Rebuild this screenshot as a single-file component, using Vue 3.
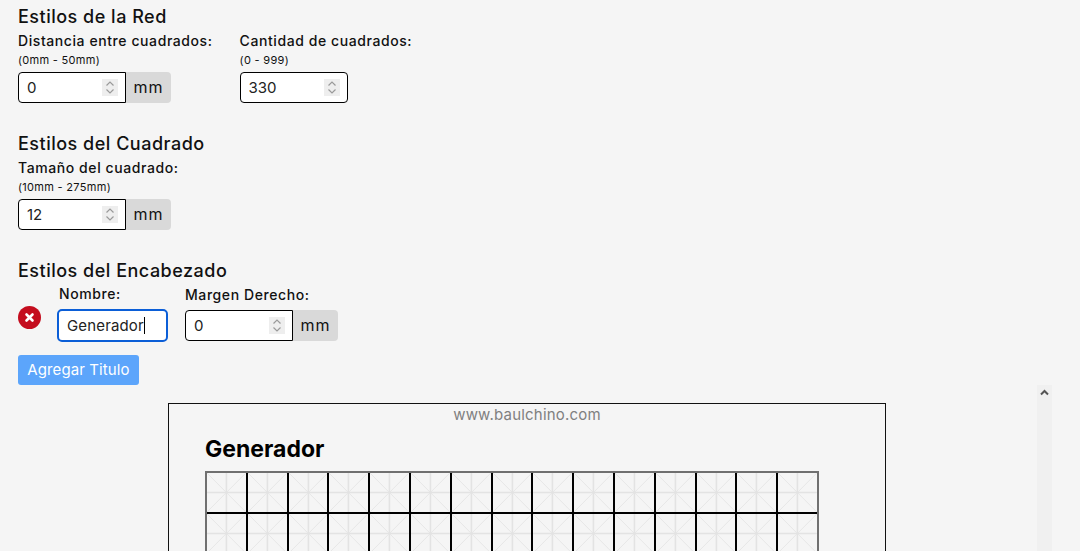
<template>
  <div class="app">
    <section class="group">
      <h2 class="groupTitle">Estilos de la Red</h2>
      <div class="fields">
        <div class="field">
          <label class="fieldLabel">Distancia entre cuadrados:</label>
          <small class="hint">(0mm - 50mm)</small>
          <div class="inputRow">
            <div class="inputWrap">
              <input class="numInput" type="number" value="0" />
              <span class="spin"><svg width="16" height="17" viewBox="0 0 16 17"><path d="M4.5 6.5L8 3l3.5 3.5M4.5 10.5L8 14l3.5-3.5" fill="none" stroke="#9a9a9a" stroke-width="1.2" /></svg></span>
            </div>
            <span class="unit">mm</span>
          </div>
        </div>
        <div class="field">
          <label class="fieldLabel">Cantidad de cuadrados:</label>
          <small class="hint">(0 - 999)</small>
          <div class="inputRow">
            <div class="inputWrap">
              <input class="numInput alone" type="number" value="330" />
              <span class="spin"><svg width="16" height="17" viewBox="0 0 16 17"><path d="M4.5 6.5L8 3l3.5 3.5M4.5 10.5L8 14l3.5-3.5" fill="none" stroke="#9a9a9a" stroke-width="1.2" /></svg></span>
            </div>
          </div>
        </div>
      </div>
    </section>

    <section class="group">
      <h2 class="groupTitle">Estilos del Cuadrado</h2>
      <div class="fields">
        <div class="field">
          <label class="fieldLabel">Tamaño del cuadrado:</label>
          <small class="hint">(10mm - 275mm)</small>
          <div class="inputRow">
            <div class="inputWrap">
              <input class="numInput" type="number" value="12" />
              <span class="spin"><svg width="16" height="17" viewBox="0 0 16 17"><path d="M4.5 6.5L8 3l3.5 3.5M4.5 10.5L8 14l3.5-3.5" fill="none" stroke="#9a9a9a" stroke-width="1.2" /></svg></span>
            </div>
            <span class="unit">mm</span>
          </div>
        </div>
      </div>
    </section>

    <section class="group last">
      <h2 class="groupTitle">Estilos del Encabezado</h2>
      <div class="titleRow">
        <button class="removeBtn" aria-label="Quitar">
          <svg width="23" height="23" viewBox="0 0 23 23">
            <circle cx="11.5" cy="11.5" r="11.5" fill="#c40d1e" />
            <path d="M8.5 8.5l6 6M14.5 8.5l-6 6" stroke="#fff" stroke-width="2.6" stroke-linecap="round" />
          </svg>
        </button>
        <div class="field">
          <label class="fieldLabel">Nombre:</label>
          <div class="textInput">Generador<span class="caret"></span></div>
        </div>
        <div class="field">
          <label class="fieldLabel">Margen Derecho:</label>
          <div class="inputRow">
            <div class="inputWrap">
              <input class="numInput" type="number" value="0" />
              <span class="spin"><svg width="16" height="17" viewBox="0 0 16 17"><path d="M4.5 6.5L8 3l3.5 3.5M4.5 10.5L8 14l3.5-3.5" fill="none" stroke="#9a9a9a" stroke-width="1.2" /></svg></span>
            </div>
            <span class="unit">mm</span>
          </div>
        </div>
      </div>
      <button class="addBtn">Agregar Titulo</button>
    </section>

    <div class="preview">
      <div class="previewBody">
        <div class="sheet">
          <div class="site">www.baulchino.com</div>
          <h3 class="sheetTitle">Generador</h3>
          <div class="grid">
            <div class="cell" v-for="n in cells" :key="n">
              <svg viewBox="0 0 40 40" preserveAspectRatio="none">
                <path d="M0 0L40 40M40 0L0 40" stroke="#e6e6e6" stroke-width="1" />
                <path d="M20 0V40M0 20H40" stroke="#e3e3e3" stroke-width="1.6" />
              </svg>
            </div>
          </div>
        </div>
      </div>
      <div class="scrollTrack">
        <svg width="15" height="14" viewBox="0 0 15 14">
          <path d="M4 9.5L7.5 6L11 9.5" fill="none" stroke="#555" stroke-width="2" />
        </svg>
      </div>
    </div>
  </div>
</template>

<script setup>
const cells = 45;
</script>

<style>
html,
body {
  margin: 0;
  height: 551px;
  overflow: hidden;
  background: #f5f5f5;
}
</style>

<style scoped>
.app {
  height: 551px;
  overflow: hidden;
  padding: 5px 0 0 18px;
  box-sizing: border-box;
  font-family: Inter, "Liberation Sans", sans-serif;
  color: #111;
  background: #f5f5f5;
}

.group {
  margin-bottom: 29px;
}

.group.last {
  margin-bottom: 0;
}

.groupTitle {
  margin: 0 0 4px;
  font-size: 18px;
  line-height: 23px;
  font-weight: 500;
  letter-spacing: 0.5px;
}

.fields {
  display: flex;
  gap: 27px;
}

.field {
  display: flex;
  flex-direction: column;
}

.fieldLabel {
  font-size: 14px;
  line-height: 18px;
  font-weight: 500;
  letter-spacing: 0.58px;
}

.hint {
  font-size: 11px;
  line-height: 13px;
  margin: 4px 0 5px;
  letter-spacing: 0.3px;
}

.inputRow {
  display: flex;
  height: 31px;
}

.inputWrap {
  position: relative;
  height: 31px;
}

.numInput {
  display: block;
  width: 108px;
  height: 31px;
  box-sizing: border-box;
  padding: 0 8px 1px;
  border: 1px solid #000;
  border-radius: 4px 0 0 4px;
  background: #fff;
  font: 400 15px Inter, "Liberation Sans", sans-serif;
  color: #222;
  outline: none;
  appearance: textfield;
}

.numInput.alone {
  border-radius: 4px;
}

.numInput::-webkit-inner-spin-button {
  appearance: none;
}

.spin {
  position: absolute;
  top: 7px;
  right: 8px;
  width: 16px;
  height: 17px;
  background: #eee;
  line-height: 0;
}

.unit {
  width: 45px;
  box-sizing: border-box;
  padding-bottom: 2px;
  display: flex;
  align-items: center;
  justify-content: center;
  background: #d9d9d9;
  border-radius: 0 4px 4px 0;
  font-size: 16px;
  letter-spacing: 1px;
}

.titleRow {
  display: flex;
  gap: 17px;
  align-items: flex-end;
  margin-top: -1px;
}

.titleRow .fieldLabel {
  margin-bottom: 6px;
}

.titleRow .field:nth-child(2) .fieldLabel {
  padding-left: 2px;
}

.removeBtn {
  width: 23px;
  height: 23px;
  padding: 0;
  margin: 0 -1px 13px 0;
  border: 0;
  background: none;
  line-height: 0;
}

.textInput {
  width: 111px;
  height: 33px;
  box-sizing: border-box;
  padding-left: 8px;
  display: flex;
  align-items: center;
  border: 2px solid #0b5ed7;
  border-radius: 5px;
  background: #fff;
  font-size: 15px;
  letter-spacing: 0.15px;
  color: #222;
}

.caret {
  width: 1px;
  height: 17px;
  background: #000;
}

.titleRow .inputRow {
  margin-bottom: 1px;
}

.addBtn {
  display: block;
  margin-top: 13px;
  width: 121px;
  height: 30px;
  padding: 0 0 2px;
  border: 0;
  border-radius: 3px;
  background: #5ca5fb;
  color: #fff;
  font: 400 15px Inter, "Liberation Sans", sans-serif;
  letter-spacing: 0.1px;
}

.preview {
  display: flex;
  width: 1034px;
  height: 300px;
  overflow: hidden;
}

.previewBody {
  flex: 1;
  display: flex;
  justify-content: center;
  padding: 18px 1px 0 0;
}

.sheet {
  width: 718px;
  height: 400px;
  box-sizing: border-box;
  border: 1px solid #111;
  padding: 0 0 0 36px;
}

.site {
  margin-left: -36px;
  padding-top: 1px;
  text-align: center;
  font-size: 15px;
  line-height: 19px;
  color: #808080;
  letter-spacing: 0.2px;
}

.sheetTitle {
  margin: 11px 0 8px;
  font-size: 23px;
  line-height: 28px;
  font-weight: 700;
  color: #000;
}

.grid {
  width: 614px;
  box-sizing: border-box;
  display: grid;
  grid-template-columns: repeat(15, 1fr);
  gap: 2px;
  background: #000;
  border: 2px solid #707070;
}

.cell {
  height: 39px;
  background: #f5f5f5;
}

.cell svg {
  display: block;
  width: 100%;
  height: 100%;
}

.scrollTrack {
  width: 15px;
  background: #f0f0f0;
  flex: none;
}

.scrollTrack svg {
  display: block;
}
</style>
